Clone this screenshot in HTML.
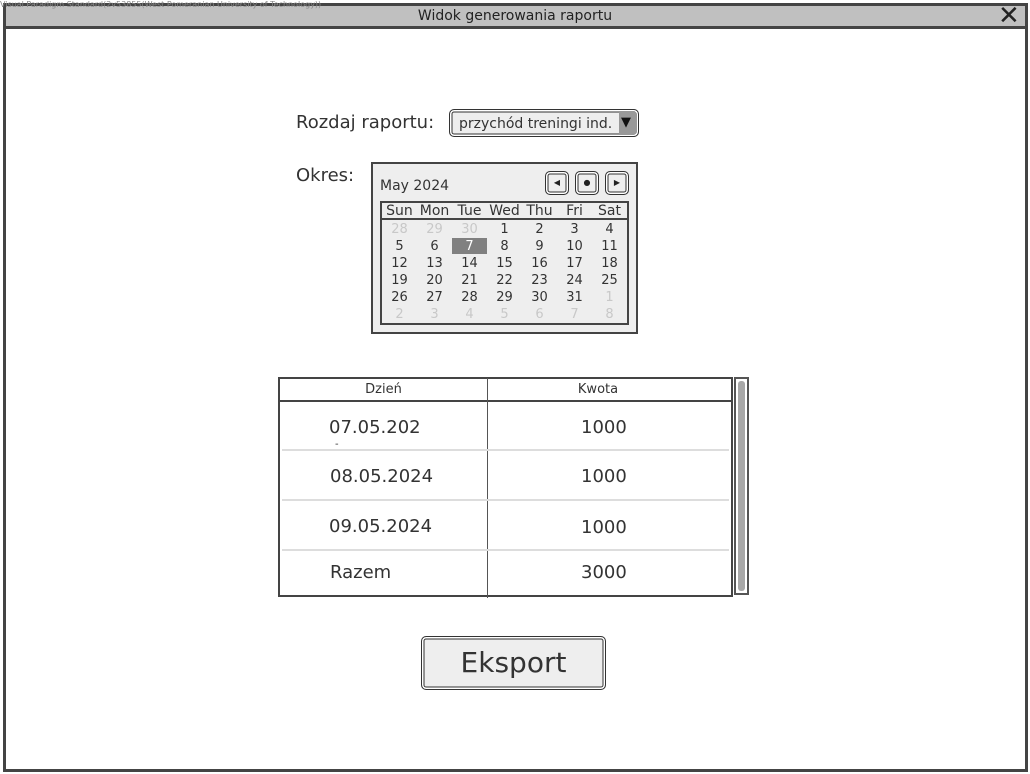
<!DOCTYPE html>
<html><head><meta charset="utf-8"><style>
*{margin:0;padding:0;box-sizing:border-box}
body{width:1030px;height:774px;background:#fff;position:relative;overflow:hidden;font-family:"DejaVu Sans","Liberation Sans",sans-serif;color:#333}
.a{position:absolute}
.c{position:absolute;text-align:center;width:35px;font-size:13px;line-height:17px}
.g{color:#c8c8c8}
.b{position:absolute;width:24px;height:24px;border:1.5px solid #333;border-radius:5px;background:#eee;box-shadow:inset 0 0 0 1.5px #fff,inset 0 0 0 2.5px #333;font-size:8px;text-align:center;line-height:21px;color:#222}
</style></head><body>
<div class="a" style="left:3px;top:3px;width:1025px;height:769px;border:3px solid #444"></div>
<div class="a" style="left:6px;top:6px;width:1019px;height:20px;background:#c0c0c0;border-bottom:3px solid #444;box-sizing:content-box"></div>
<div class="a" style="left:0;top:0;font-size:8px;color:#888;white-space:nowrap">Visual Paradigm Standard(2v53855(West Pomeranian University of Technology))</div>
<div class="a" style="left:0;width:1030px;top:8px;text-align:center;font-size:14px;color:#222">Widok generowania raportu</div>
<div class="a" style="left:998px;top:3px;font-size:26px;line-height:26px;color:#222">✕</div>

<div class="a" style="left:296px;top:112px;font-size:18px">Rozdaj raportu:</div>
<div class="a" style="left:449px;top:109px;width:190px;height:28px;border:1.5px solid #333;border-radius:5px;background:#eee;box-shadow:inset 0 0 0 1.5px #fff,inset 0 0 0 2.5px #333"></div>
<div class="a" style="left:459px;top:116px;font-size:14px">przychód treningi ind.</div>
<div class="a" style="left:619px;top:112px;width:17px;height:22px;background:#999"></div>
<div class="a" style="left:621px;top:115px;font-size:13px;color:#111">▼</div>

<div class="a" style="left:296px;top:165px;font-size:18px">Okres:</div>
<div class="a" style="left:371px;top:162px;width:267px;height:172px;border:2px solid #444;background:#eee"></div>
<div class="a" style="left:380px;top:178px;font-size:14px">May 2024</div>
<div class="b" style="left:545px;top:171px">◀</div>
<div class="b" style="left:575px;top:171px">●</div>
<div class="b" style="left:605px;top:171px">▶</div>
<div class="a" style="left:380px;top:201px;width:249px;height:124px;border:2px solid #444"></div>
<div class="a" style="left:380px;top:218px;width:249px;height:2px;background:#444"></div>
<div class="a" style="left:452px;top:238px;width:35px;height:16px;background:#808080"></div>
<div class="a" style="left:382px;top:203px;width:248px;height:17px">
<span class="c" style="left:0;font-size:14px">Sun</span><span class="c" style="left:35px;font-size:14px">Mon</span><span class="c" style="left:70px;font-size:14px">Tue</span><span class="c" style="left:105px;font-size:14px">Wed</span><span class="c" style="left:140px;font-size:14px">Thu</span><span class="c" style="left:175px;font-size:14px">Fri</span><span class="c" style="left:210px;font-size:14px">Sat</span>
</div>
<div class="a" style="left:382px;top:221px;width:248px;height:102px">
<span class="c g" style="left:0;top:0">28</span><span class="c g" style="left:35px;top:0">29</span><span class="c g" style="left:70px;top:0">30</span><span class="c" style="left:105px;top:0">1</span><span class="c" style="left:140px;top:0">2</span><span class="c" style="left:175px;top:0">3</span><span class="c" style="left:210px;top:0">4</span>
<span class="c" style="left:0;top:17px">5</span><span class="c" style="left:35px;top:17px">6</span><span class="c" style="left:70px;top:17px;color:#fff">7</span><span class="c" style="left:105px;top:17px">8</span><span class="c" style="left:140px;top:17px">9</span><span class="c" style="left:175px;top:17px">10</span><span class="c" style="left:210px;top:17px">11</span>
<span class="c" style="left:0;top:34px">12</span><span class="c" style="left:35px;top:34px">13</span><span class="c" style="left:70px;top:34px">14</span><span class="c" style="left:105px;top:34px">15</span><span class="c" style="left:140px;top:34px">16</span><span class="c" style="left:175px;top:34px">17</span><span class="c" style="left:210px;top:34px">18</span>
<span class="c" style="left:0;top:51px">19</span><span class="c" style="left:35px;top:51px">20</span><span class="c" style="left:70px;top:51px">21</span><span class="c" style="left:105px;top:51px">22</span><span class="c" style="left:140px;top:51px">23</span><span class="c" style="left:175px;top:51px">24</span><span class="c" style="left:210px;top:51px">25</span>
<span class="c" style="left:0;top:68px">26</span><span class="c" style="left:35px;top:68px">27</span><span class="c" style="left:70px;top:68px">28</span><span class="c" style="left:105px;top:68px">29</span><span class="c" style="left:140px;top:68px">30</span><span class="c" style="left:175px;top:68px">31</span><span class="c g" style="left:210px;top:68px">1</span>
<span class="c g" style="left:0;top:85px">2</span><span class="c g" style="left:35px;top:85px">3</span><span class="c g" style="left:70px;top:85px">4</span><span class="c g" style="left:105px;top:85px">5</span><span class="c g" style="left:140px;top:85px">6</span><span class="c g" style="left:175px;top:85px">7</span><span class="c g" style="left:210px;top:85px">8</span>
</div>

<div class="a" style="left:278px;top:377px;width:455px;height:220px;border:2px solid #444"></div>
<div class="a" style="left:278px;top:400px;width:455px;height:2px;background:#444"></div>
<div class="a" style="left:487px;top:378px;width:1px;height:220px;background:#555"></div>
<div class="a" style="left:282px;top:449px;width:447px;height:2px;background:#ddd"></div>
<div class="a" style="left:282px;top:499px;width:447px;height:2px;background:#ddd"></div>
<div class="a" style="left:282px;top:549px;width:447px;height:2px;background:#ddd"></div>
<div class="a" style="left:280px;width:207px;top:382px;text-align:center;font-size:13px">Dzień</div>
<div class="a" style="left:488px;width:220px;top:382px;text-align:center;font-size:13px">Kwota</div>
<div class="a" style="left:329px;top:417px;font-size:18px">07.05.202</div>
<div class="a" style="left:335px;top:439px;font-size:10px">-</div>
<div class="a" style="left:330px;top:466px;font-size:18px">08.05.2024</div>
<div class="a" style="left:329px;top:516px;font-size:18px">09.05.2024</div>
<div class="a" style="left:330px;top:562px;font-size:18px">Razem</div>
<div class="a" style="left:581px;top:417px;font-size:18px">1000</div>
<div class="a" style="left:581px;top:466px;font-size:18px">1000</div>
<div class="a" style="left:581px;top:517px;font-size:18px">1000</div>
<div class="a" style="left:581px;top:562px;font-size:18px">3000</div>
<div class="a" style="left:734px;top:377px;width:15px;height:218px;border:2px solid #555;background:#fff"></div>
<div class="a" style="left:738px;top:381px;width:7px;height:210px;background:#a8a8a8;border-radius:3px"></div>

<div class="a" style="left:421px;top:636px;width:185px;height:54px;border:1.5px solid #333;border-radius:5px;background:#eee;box-shadow:inset 0 0 0 1.5px #fff,inset 0 0 0 2.5px #333"></div>
<div class="a" style="left:421px;width:185px;top:646px;text-align:center;font-size:28px">Eksport</div>
</body></html>
